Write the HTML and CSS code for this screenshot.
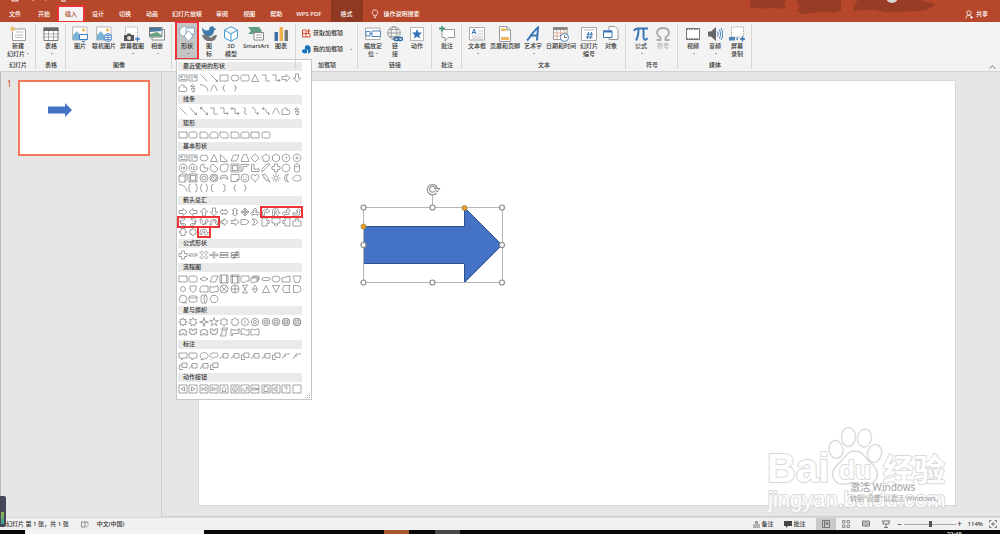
FILE: index.html
```
<!DOCTYPE html>
<html lang="zh-CN">
<head>
  <meta charset="utf-8">
  <title>演示文稿</title>
  <meta name="viewport" content="width=device-width, initial-scale=1">
  <link rel="stylesheet" href="styles.css">
</head>
<body>
  <header class="titlebar">
    <svg class="title-art" width="190" height="15" viewBox="0 0 190 15">
      <g fill="#983c26">
        <path d="M0 0H36L34 5L36 9C26 7 10 10 0 7Z"/>
        <path d="M46 0H91V11L82 13C76 10 66 13 52 14L47 11L50 7Z"/>
        <path d="M108 0H170L185 4C180 13 160 11 148 12C132 14 128 9 118 10L103 11L104 5Z"/>
      </g>
      <circle cx="142" cy="-3" r="6" fill="#d8d4d2"/>
    </svg>
    <svg class="quick-access" width="60" height="3" viewBox="0 0 60 3">
      <path d="M2 0V1H8V0M51 1H56" stroke="#fff" fill="none"/>
      <path d="M22 0l2 1M36 0l-1 1" stroke="#e0a595" fill="none"/>
    </svg>
    <nav class="tabs">
      <button class="tab tab-file">文件</button>
      <button class="tab">开始</button>
      <button class="tab active">插入</button>
      <button class="tab">设计</button>
      <button class="tab">切换</button>
      <button class="tab">动画</button>
      <button class="tab tab-long">幻灯片放映</button>
      <button class="tab">审阅</button>
      <button class="tab">视图</button>
      <button class="tab">帮助</button>
      <button class="tab tab-long">WPS PDF</button>
      <button class="tab tab-format">格式</button>
      <button class="tell-me">
        <svg width="8" height="10" viewBox="0 0 8 10" fill="none" stroke="#fff" stroke-width=".8"><path d="M2.800 7V6C.2 4 1 1 4 1s3.800 3 1.200 5V7ZM3 8.600H5"/></svg>
        操作说明搜索
      </button>
    </nav>
    <button class="share">
      <svg width="8" height="9" viewBox="0 0 8 9" fill="none" stroke="#fff" stroke-width=".8"><circle cx="4" cy="3" r="2.200"/><path d="M.8 8.500C1 6 2.500 5.200 4 5.200S6 6 6.200 7M5 7.500H8M6.500 6V9"/></svg>
      共享
    </button>
  </header>

  <div class="ribbon">
    <section class="group">
      <div class="group-body">
        <button class="tool w28">
          <svg class="icon" viewBox="0 0 16 16" fill="none"><path d="M3 3H15.500V14.500H2.500V6" fill="#fff" stroke="#999"/><path d="M6 6H13M5 9H13M5 11.500H13" stroke="#bbb"/><path d="M2.500 0V6M0 3H5.500M.7 1L4.500 5M4.500 1L.7 5" stroke="#eeb34c" stroke-width=".8"/></svg>
          <span>新建</span><span>幻灯片<i class="caret"></i></span>
        </button>
      </div>
      <h2>幻灯片</h2>
    </section>
    <section class="group">
      <div class="group-body">
        <button class="tool w22">
          <svg class="icon" viewBox="0 0 16 16"><path d="M1 2H15V14.500H1Z" fill="#fff" stroke="#777"/><path d="M.5 1.500H15.500V5H.5Z" fill="#666"/><path d="M1 8H15M1 11H15M5.500 5V14M10.500 5V14" stroke="#888" stroke-width=".7"/></svg>
          <span>表格</span><span><i class="caret"></i></span>
        </button>
      </div>
      <h2>表格</h2>
    </section>
    <section class="group">
      <div class="group-body">
        <button class="tool w20">
          <svg class="icon" viewBox="0 0 16 16"><path d="M.5 1H15V14H.5Z" fill="#fff" stroke="#aaa" stroke-width=".8"/><circle cx="11.500" cy="4" r="1.500" fill="#f0b04c"/><path d="M1 13V9L5 5L10 12L8 14H1" fill="#7db4d4"/><path d="M7.500 8.500H15.500V13.500H7.500ZM10 15.500H13" fill="#fff" stroke="#3f7fc1"/></svg>
          <span>图片</span>
        </button>
        <button class="tool w28">
          <svg class="icon" viewBox="0 0 16 16"><path d="M.5 1H15V14H.5Z" fill="#fff" stroke="#aaa" stroke-width=".8"/><circle cx="11.500" cy="4" r="1.500" fill="#f0b04c"/><path d="M1 13V9L5 5L10 12L8 14H1" fill="#7db4d4"/><g fill="#fff" stroke="#3f7fc1" stroke-width=".8"><circle cx="12" cy="11.500" r="4"/><path d="M8 11.500H16M12 7.500V15.500M9 9.500H15M9 13.500H15"/></g></svg>
          <span>联机图片</span>
        </button>
        <button class="tool w28">
          <svg class="icon" viewBox="0 0 16 16"><path d="M1.500 8V1H13.500V9" fill="#fff" stroke="#999" stroke-dasharray="1 1"/><path d="M0 9H2.500L3.500 7.500H6.500L7.500 9H10V15H0Z" fill="#555"/><circle cx="5" cy="12" r="2" fill="#ddd"/><path d="M11 13H16M13.500 10.500V15.500" stroke="#3f7fc1" stroke-width="1.300"/></svg>
          <span>屏幕截图</span><span><i class="caret"></i></span>
        </button>
        <button class="tool w22">
          <svg class="icon" viewBox="0 0 16 16"><path d="M3 3.500H15.500V14H3Z" fill="#fff" stroke="#888"/><path d="M.5 1.500H13V11H.5Z" fill="#fff" stroke="#777"/><path d="M1 2H12.500V5L1 6Z" fill="#4b7ba5"/><path d="M1 8L8 6L12.500 9V10.500H1Z" fill="#66a07d"/></svg>
          <span>相册</span><span><i class="caret"></i></span>
        </button>
      </div>
      <h2>图像</h2>
    </section>
    <section class="group">
      <div class="group-body">
        <div class="dropdown">
          <button class="tool w22 open" aria-expanded="true">
            <svg class="icon" viewBox="0 0 16 16" fill="#fff" stroke="#7197bd" stroke-width=".8"><circle cx="5.500" cy="5.500" r="5"/><path d="M7 2H15.500V8H7Z"/><path d="M9.500 4.500L14 10L9.500 15.500L5 10Z"/></svg>
            <span>形状</span><span><i class="caret"></i></span>
          </button>
          <div class="shape-menu">
            <section>
              <h3>最近使用的形状</h3>
              <div class="shape-grid" data-shapes="text vtext line lineArrow rect ellipse roundRect triangle elbow elbowArrow right down freeform scribble arc curve lbrace rbrace"></div>
            </section>
            <section>
              <h3>线条</h3>
              <div class="shape-grid" data-shapes="line lineArrow lineDouble elbow elbowArrow elbowDouble curved curvedArrow curvedDouble curve freeform scribble"></div>
            </section>
            <section>
              <h3>矩形</h3>
              <div class="shape-grid" data-shapes="rect roundRect snip snipTop snipDiag round1 roundTop rect roundRect"></div>
            </section>
            <section>
              <h3>基本形状</h3>
              <div class="shape-grid" data-shapes="text vtext ellipse triangle rightTriangle parallelogram trapezoid diamond pentagon hexagon heptagon octagon decagon dodecagon pie chord teardrop frame halfFrame corner stripe plus plaque can cube bevel donut noSymbol blockArc folded smiley heart lightning sun moon cloud arc parens braces lbracket rbracket lbrace rbrace"></div>
            </section>
            <section>
              <h3>箭头总汇</h3>
              <div class="shape-grid" data-shapes="right left up down leftRight upDown quad threeWay bent uturn leftUp bentUp curvedRight curvedLeft curvedUp curvedDown striped notched homePlate chevron calloutRight calloutDown calloutLeft calloutUp calloutLR calloutQuad circular">
                <span class="mark mark-bent"></span>
                <span class="mark mark-curved"></span>
                <span class="mark mark-circular"></span>
              </div>
            </section>
            <section>
              <h3>公式形状</h3>
              <div class="shape-grid" data-shapes="plus minus multiply divide equal notEqual"></div>
            </section>
            <section>
              <h3>流程图</h3>
              <div class="shape-grid" data-shapes="rect roundRect decision parallelogram predefined internal document multiDoc terminator ellipse manualInput manualOp connector offPage snipCard tape summing or collate sort triangle merge stored delay seqDisk magDisk direct display"></div>
            </section>
            <section>
              <h3>星与旗帜</h3>
              <div class="shape-grid" data-shapes="burst1 burst2 star4 star5 star6 star7 star8 star10 star12 star16 star24 star32 ribbonUp ribbonDown ribbonUp ribbonDown vscroll hscroll wave wave2"></div>
            </section>
            <section>
              <h3>标注</h3>
              <div class="shape-grid" data-shapes="callRect callRound callOval callCloud callLine callLine callBent callLine callLine callBent callOpen callOpen callBent callLine callLine callBent"></div>
            </section>
            <section>
              <h3>动作按钮</h3>
              <div class="shape-grid" data-shapes="actBack actNext actFirst actLast actHome actInfo actReturn actMovie actDoc actSound actHelp actBlank"></div>
            </section>
            <svg class="grip" width="5" height="5" viewBox="0 0 5 5" fill="#aaa"><path d="M4 0h1v1H4ZM2 2h1v1H2ZM4 2h1v1H4ZM0 4h1v1H0ZM2 4h1v1H2ZM4 4h1v1H4Z"/></svg>
          </div>
        </div>
        <button class="tool w22">
          <svg class="icon" viewBox="0 0 16 16"><path d="M1 1C2 4 5 5 8 4C8 0 12-1 13 2L15.500 3L13 4.500C13 9 9 11 6 10C3 9 1 6 1 1Z" fill="#3f79ad"/><path d="M1 9C5 8 8 10 10 12C12 9 14 9 16 9C15 14 12 16 8 15C5 15 2 13 1 9Z" fill="#777"/></svg>
          <span>图</span><span>标</span>
        </button>
        <button class="tool w22">
          <svg class="icon" viewBox="0 0 16 16" fill="#fff" stroke="#3e9bd0"><path d="M8 .8L14.500 4.200V11.800L8 15.200L1.500 11.800V4.200ZM1.500 4.200L8 7.800L14.500 4.200M8 7.800V15"/></svg>
          <span>3D</span><span>模型</span>
        </button>
        <button class="tool w28">
          <svg class="icon" viewBox="0 0 16 16"><path d="M0 1H11L14 5L11 8H0L3 5Z" fill="#5f9e80"/><path d="M6 6.500H15.500V14H6Z" fill="#fff" stroke="#888"/><path d="M8 9H14M8 11.500H14" stroke="#aaa"/></svg>
          <span>SmartArt</span>
        </button>
        <button class="tool w22">
          <svg class="icon" viewBox="0 0 16 16"><path d="M1.500 6H5V15H1.500Z" fill="#3f6fa8"/><path d="M6.500 1H10V15H6.500Z" fill="#efb04c"/><path d="M11.500 4H15V15H11.500Z" fill="#777"/></svg>
          <span>图表</span>
        </button>
      </div>
    </section>
    <section class="group group-addins">
      <div class="group-body addins">
        <button class="addin">
          <svg width="9" height="9" viewBox="0 0 9 9" fill="none" stroke="#d2502e"><path d="M.5 1H4V8H.5ZM.5 4.500H8V8H4M6.500 0V4M4.800 2H8.500"/></svg>
          获取加载项
        </button>
        <button class="addin">
          <svg width="9" height="9" viewBox="0 0 9 9" fill="#1673be"><path d="M3 1L6 0L8.500 2V7L6 9V5L3 4ZM0 5L3 4L5 5V8L2 8.500L0 7Z"/></svg>
          我的加载项<i class="caret"></i>
        </button>
      </div>
      <h2>加载项</h2>
    </section>
    <section class="group">
      <div class="group-body">
        <button class="tool w22">
          <svg class="icon" viewBox="0 0 16 16" fill="#fff"><path d="M.5 2H15V13.500H.5Z" stroke="#aaa"/><path d="M1 5.500H5V10H1ZM7 5H15.500V10.500H7Z" stroke="#4e86bd"/><path d="M5 7.500H7" stroke="#4e86bd"/></svg>
          <span>缩放定</span><span>位<i class="caret"></i></span>
        </button>
        <button class="tool w22">
          <svg class="icon" viewBox="0 0 16 16" fill="none"><g stroke="#888" stroke-width=".8"><circle cx="7" cy="7" r="6.300"/><ellipse cx="7" cy="7" rx="3" ry="6.300"/><path d="M.7 7H13.300M2 3.500H12M2 10.500H12"/></g><g stroke="#2f6ca8" stroke-width="1.300"><rect x="7" y="11.500" width="5" height="3" rx="1.500"/><rect x="11" y="11.500" width="4.500" height="3" rx="1.500"/></g></svg>
          <span>链</span><span>接</span>
        </button>
        <button class="tool w22">
          <svg class="icon" viewBox="0 0 16 16"><path d="M1.500 1.500H14.500V14.500H1.500Z" fill="#fff" stroke="#777" stroke-dasharray="1 1"/><path d="M8 3L9.400 6.400L13 6.600L10.200 9L11.100 12.600L8 10.600L4.900 12.600L5.800 9L3 6.600L6.600 6.400Z" fill="#2f72b5"/></svg>
          <span>动作</span>
        </button>
      </div>
      <h2>链接</h2>
    </section>
    <section class="group">
      <div class="group-body">
        <button class="tool w22">
          <svg class="icon" viewBox="0 0 16 16"><path d="M3 3.500H15.500V11.500H9L6 15V11.500H3Z" fill="#fff" stroke="#999"/><path d="M0 2.500H6M3 0V5.500" stroke="#4c9b78" stroke-width="1.800"/></svg>
          <span>批注</span>
        </button>
      </div>
      <h2>批注</h2>
    </section>
    <section class="group">
      <div class="group-body">
        <button class="tool w22">
          <svg class="icon" viewBox="0 0 16 16" fill="none"><path d="M.5 1.500H15.500V14H.5Z" fill="#fff" stroke="#aaa"/><path d="M3 8L5 3L7 8M3.700 6.500H6.300" stroke="#2f72b5"/><path d="M9 5H14M9 7.500H14M3 10H14M3 12H14" stroke="#bbb" stroke-width=".8"/></svg>
          <span>文本框</span><span><i class="caret"></i></span>
        </button>
        <button class="tool w34">
          <svg class="icon" viewBox="0 0 16 16"><path d="M2.500 .5H10L13.500 4V15.500H2.500Z" fill="#fff" stroke="#999"/><path d="M4 2.500H9.500V5H4ZM4 11H12V14H4Z" fill="#edb95c"/><path d="M10 .5V4H13.500" fill="none" stroke="#999"/></svg>
          <span>页眉和页脚</span>
        </button>
        <button class="tool w22">
          <svg class="icon" viewBox="0 0 16 16" fill="none" stroke="#3a76b5" stroke-width="2"><path d="M2 14.500C5 12 8 5 13 1.500L12 14.500M5 9.500H12"/></svg>
          <span>艺术字</span><span><i class="caret"></i></span>
        </button>
        <button class="tool w34">
          <svg class="icon" viewBox="0 0 16 16"><path d="M.5 1.500H14V13.500H.5Z" fill="#fff" stroke="#999"/><path d="M0 1H14.500V4H0Z" fill="#888"/><path d="M1 7H14M1 10H14M4 4V13M7.500 4V13M11 4V13" stroke="#d99778" stroke-width=".8"/><circle cx="11.500" cy="11.500" r="4" fill="#fff" stroke="#4e86bd"/><path d="M11.500 9V11.500H14" fill="none" stroke="#555" stroke-width=".8"/></svg>
          <span>日期和时间</span>
        </button>
        <button class="tool w22">
          <svg class="icon" viewBox="0 0 16 16"><path d="M.5 1.500H15.500V14.500H.5Z" fill="#fff" stroke="#aaa"/><path d="M3 4H13" stroke="#bbb"/><path d="M7.500 6L6.500 13M10.500 6L9.500 13M5.500 8.200H12M5 11H11.500" stroke="#3a76b5" fill="none"/></svg>
          <span>幻灯片</span><span>编号</span>
        </button>
        <button class="tool w22">
          <svg class="icon" viewBox="0 0 16 16" fill="#fff"><path d="M6 .5H12L15 3.500V13.500H6Z" stroke="#999"/><path d="M.5 5H9V11.500H.5Z" stroke="#3a76b5"/><path d="M.5 5.500H9" stroke="#3a76b5" stroke-width="2"/></svg>
          <span>对象</span>
        </button>
      </div>
      <h2>文本</h2>
    </section>
    <section class="group">
      <div class="group-body">
        <button class="tool w22">
          <svg class="icon" viewBox="0 0 16 16" fill="none" stroke="#3a76b5" stroke-width="2"><path d="M1 5C2 2.500 3 2.500 5 2.500H15M5.500 3C5.500 8 5 11 3 14.500M10.500 3V11C10.500 14 12.500 15 14.500 12"/></svg>
          <span>公式</span><span><i class="caret"></i></span>
        </button>
        <button class="tool w22" disabled>
          <svg class="icon" viewBox="0 0 16 16" fill="none" stroke="#aaa" stroke-width="1.800"><path d="M1.500 14H5.500V11.500C0 8 1.500 2 8 2S16 8 10.500 11.500V14H14.500"/></svg>
          <span>符号</span>
        </button>
      </div>
      <h2>符号</h2>
    </section>
    <section class="group">
      <div class="group-body">
        <button class="tool w22">
          <svg class="icon" viewBox="0 0 16 16"><path d="M1.500 2.500H14.500V13.500H1.500Z" fill="#fff" stroke="#777"/><path d="M1.500 3H14.500M1.500 13H14.500" stroke="#777" stroke-width="2" stroke-dasharray="1.500 1"/></svg>
          <span>视频</span><span><i class="caret"></i></span>
        </button>
        <button class="tool w22">
          <svg class="icon" viewBox="0 0 16 16"><path d="M1 5.500H4L9 1V15L4 10.500H1Z" fill="#666"/><path d="M10.500 5.500Q12 8 10.500 10.500M12.500 3.500Q15 8 12.500 12.500M14 2Q17.500 8 14 14" fill="none" stroke="#4e86bd"/></svg>
          <span>音频</span><span><i class="caret"></i></span>
        </button>
        <button class="tool w22">
          <svg class="icon" viewBox="0 0 16 16"><path d="M2.500 1H14.500V11H2.500Z" fill="#fff" stroke="#999" stroke-dasharray="1 1"/><path d="M0 11H6V14.500H0ZM7.500 11.500H9V14H7.500Z" fill="#4e86bd"/><path d="M11 13H16M13.500 10.500V15.500" stroke="#2f72b5" stroke-width="1.300"/></svg>
          <span>屏幕</span><span>录制</span>
        </button>
      </div>
      <h2>媒体</h2>
    </section>
    <button class="collapse" aria-label="折叠功能区"><svg width="7" height="4" viewBox="0 0 7 4" fill="none" stroke="#777"><path d="M.5 3.500L3.500 .8L6.500 3.500"/></svg></button>
  </div>

  <main class="editor">
    <aside class="thumbs">
      <span class="thumb-number">1</span>
      <div class="thumb">
        <svg class="thumb-arrow" width="24" height="14" viewBox="0 0 24 14"><path d="M0 3.500H17V0L24 7L17 14V10.500H0Z" fill="#4472c4"/></svg>
      </div>
    </aside>
    <div class="stage">
      <div class="slide">
        <svg class="arrow-shape" width="156" height="110" viewBox="0 0 156 110">
          <path d="M8.500 45.500H109.500V26.500L147 64L109.500 101.500V82.500H8.500Z" fill="#4472c4" stroke="#2f528f"/>
          <path d="M8.500 26.500H147.500V101.500H8.500ZM77.500 14V26" fill="none" stroke="#b5b5b5"/>
          <g fill="#fff" stroke="#8c8c8c" stroke-width="1.200">
            <circle cx="8.500" cy="26.500" r="2.500"/>
            <circle cx="77.500" cy="26.500" r="2.500"/>
            <circle cx="147" cy="26.500" r="2.500"/>
            <circle cx="8.500" cy="64" r="2.500"/>
            <circle cx="147" cy="64" r="2.500"/>
            <circle cx="8.500" cy="101.500" r="2.500"/>
            <circle cx="77.500" cy="101.500" r="2.500"/>
            <circle cx="147" cy="101.500" r="2.500"/>
          </g>
          <g fill="#f0a01e" stroke="#9b8050" stroke-width=".8">
            <circle cx="8.500" cy="45.500" r="2.500"/>
            <circle cx="109.500" cy="27" r="2.500"/>
          </g>
          <g fill="none">
            <path d="M81.500 12A5.200 5.200 0 1 1 82.500 7.500M80 10A3 3 0 1 1 80.500 7.500" stroke="#909090" stroke-width="1.200"/>
            <path d="M79.500 7.500H85L82 11Z" fill="#fff" stroke="#909090"/>
          </g>
        </svg>
      </div>
    </div>
    <svg class="watermark" width="190" height="92" viewBox="0 0 190 92">
      <g fill="#fff" stroke="#dcdcdc" stroke-width="1.500">
        <ellipse cx="74" cy="25.500" rx="7" ry="9" transform="rotate(-12 74 25.500)"/>
        <ellipse cx="86.500" cy="13" rx="7" ry="9.500"/>
        <ellipse cx="102.500" cy="14" rx="7" ry="9" transform="rotate(12 102.500 14)"/>
        <ellipse cx="112.500" cy="29.500" rx="7" ry="9" transform="rotate(15 112.500 29.500)"/>
        <path d="M93 27C84 27 84 34 76 40C70 46 69 52 73 57C78 63 85 59 93 59S108 63 113 57C117 52 116 46 110 40C102 34 102 27 93 27Z"/>
      </g>
      <g class="logo-text">
        <text x="5" y="58" font-size="40">Bai</text>
        <text x="77" y="55" font-size="26">du</text>
        <text x="121" y="57" font-size="31">经验</text>
      </g>
      <text class="logo-url" x="6" y="83" font-size="22">jingyan.baidu.com</text>
    </svg>
    <div class="activate">
      <p class="activate-title">激活 Windows</p>
      <p>转到“设置”以激活 Windows。</p>
    </div>
  </main>

  <footer class="statusbar">
    <span>幻灯片 第 1 张，共 1 张</span>
    <svg width="8" height="7" viewBox="0 0 8 7" fill="none" stroke="#777" stroke-width=".8"><path d="M4 1H.5V6H4ZM4 1H7V3M5 6.500L7.500 4"/></svg>
    <span class="language">中文(中国)</span>
    <button class="status-btn">
      <svg width="7" height="7" viewBox="0 0 7 7" fill="none" stroke="#555" stroke-width=".8"><path d="M3.500 0L5 2H2ZM0 4H7M0 6H7"/></svg>
      备注
    </button>
    <button class="status-btn">
      <svg width="8" height="7" viewBox="0 0 8 7" fill="#444"><path d="M0 0H8V5H4L2 7V5H0Z"/></svg>
      批注
    </button>
    <div class="views">
      <button class="view active" aria-label="普通"><svg width="8" height="8" viewBox="0 0 8 8" fill="none" stroke="#777"><path d="M.5 .5H7.500V7.500H.5ZM2.500 1V7M4 2.500H6V4.500H4Z"/></svg></button>
      <button class="view" aria-label="幻灯片浏览"><svg width="8" height="8" viewBox="0 0 8 8" fill="none" stroke="#777" stroke-width=".8"><path d="M.5 .5H3V3H.5ZM5 .5H7.500V3H5ZM.5 5H3V7.500H.5ZM5 5H7.500V7.500H5Z"/></svg></button>
      <button class="view" aria-label="阅读视图"><svg width="8" height="8" viewBox="0 0 8 8" fill="none" stroke="#777"><path d="M.5 1H3.500L4 2L4.500 1H7.500V6H.5ZM4 1.500V7M2 2V5M6 2V5"/></svg></button>
      <button class="view" aria-label="幻灯片放映"><svg width="8" height="8" viewBox="0 0 8 8" fill="none" stroke="#777"><path d="M0 1H8M1 1V4H7V1M4 4V7M2 7.500H6"/></svg></button>
    </div>
    <button class="zoom-step" aria-label="缩小">−</button>
    <input class="zoom" type="range" min="0" max="100" value="52" aria-label="显示比例">
    <button class="zoom-step" aria-label="放大">+</button>
    <span class="zoom-value">114%</span>
    <button class="fit" aria-label="适应窗口"><svg width="8" height="8" viewBox="0 0 8 8" fill="none" stroke="#777"><path d="M.5 2.500V.5H2.500M5.500 .5H7.500V2.500M7.500 5.500V7.500H5.500M2.500 7.500H.5V5.500M4 2V6M2 4H6"/></svg></button>
  </footer>

  <div class="taskbar">
    <span class="task-search"></span>
    <span class="task-app task-orange"></span>
    <span class="task-app"></span>
    <span class="task-clock">22:45</span>
  </div>
  <div class="meter"><span></span></div>

  <script src="shapes.js"></script>
</body>
</html>
```

FILE: styles.css
```
* {
  box-sizing: border-box;
}

body {
  margin: 0;
  height: 100vh;
  display: flex;
  flex-direction: column;
  overflow: hidden;
  position: relative;
  background: #e6e6e6;
  color: #333;
  font-family: "Noto Sans", "Noto Sans CJK SC", sans-serif;
  font-size: 6px;
  font-weight: 500;
  line-height: 8px;
}

button {
  margin: 0;
  padding: 0;
  border: 0;
  background: none;
  color: inherit;
  font: inherit;
}

h2, h3, p {
  margin: 0;
  font-size: 6px;
  font-weight: inherit;
}

svg {
  display: block;
  flex: none;
}

/* Title bar and tabs */
.titlebar {
  position: relative;
  flex: none;
  display: flex;
  justify-content: space-between;
  align-items: flex-end;
  height: 22px;
  background: #b7472a;
  color: #fff;
}

.title-art {
  position: absolute;
  top: 0;
  right: 60px;
}

.quick-access {
  position: absolute;
  top: 0;
  left: 10px;
}

.tabs {
  position: relative;
  display: flex;
  align-self: stretch;
  align-items: flex-end;
  gap: 1px;
}

.tab {
  height: 16px;
  padding: 0 7px;
  white-space: nowrap;
}

.tab-file {
  padding: 0 9px;
}

.tab-long {
  padding: 0 6px;
}

.tab.active {
  background: #f3f3f3;
  color: #b7472a;
  outline: 2px solid #ee3338;
  outline-offset: -1px;
}

.tab-format {
  height: 22px;
  margin-left: 2px;
  padding: 6px 10px 0;
  background: #8f3822;
}

.tell-me,
.share {
  display: flex;
  align-items: center;
  gap: 5px;
  height: 16px;
}

.tell-me {
  margin-left: 7px;
}

.share {
  position: relative;
  gap: 3px;
  margin-right: 12px;
}

/* Ribbon */
.ribbon {
  position: relative;
  z-index: 2;
  flex: none;
  display: flex;
  height: 50px;
  background: #f3f3f3;
  border-bottom: 1px solid #d2d2d2;
}

.group {
  position: relative;
  display: flex;
  flex-direction: column;
  justify-content: space-between;
  padding: 0 4px 2px;
}

.group::after {
  content: "";
  position: absolute;
  top: 2px;
  right: 0;
  bottom: 2px;
  border-right: 1px solid #d5d5d5;
}

.group h2 {
  text-align: center;
}

.group-body {
  display: flex;
}

.tool {
  display: flex;
  flex-direction: column;
  align-items: center;
  height: 37px;
  padding-top: 4px;
  white-space: nowrap;
}

.tool:disabled {
  color: #aaa;
}

.tool span {
  min-height: 8px;
}

.icon {
  width: 16px;
  height: 16px;
}

.w20 { width: 20px; }
.w22 { width: 22px; }
.w28 { width: 28px; }
.w34 { width: 34px; }

.caret {
  display: inline-block;
  margin: 0 0 2px 2px;
  border: 1px solid transparent;
  border-top-color: #555;
  border-bottom: 0;
}

.tool.open {
  background: #c5c5c5;
  outline: 2px solid #ee3338;
  outline-offset: -1px;
}

.group-addins {
  width: 62px;
}

.addins {
  flex-direction: column;
  gap: 6px;
  padding: 6px 0 0 2px;
}

.addin {
  display: flex;
  align-items: center;
  gap: 2px;
  height: 10px;
  white-space: nowrap;
}

.addin .caret {
  margin: 0 0 0 5px;
}

.collapse {
  align-self: flex-end;
  margin: 0 4px 2px auto;
}

/* Shapes menu */
.dropdown {
  position: relative;
}

.shape-menu {
  position: absolute;
  top: 37px;
  left: 0;
  display: flex;
  flex-direction: column;
  justify-content: space-between;
  width: 136px;
  height: 341px;
  padding: 2px 9px 5px 1px;
  background: #fff;
  border: 1px solid #c6c6c6;
}

.shape-menu h3 {
  height: 9px;
  padding-left: 5px;
  background: #eaeaea;
  line-height: 9px;
}

.shape-grid {
  position: relative;
  display: grid;
  grid-template-columns: repeat(12, 1fr);
  grid-auto-rows: 10px;
  margin-top: 2px;
}

.shape {
  display: flex;
  justify-content: center;
  align-items: center;
}

.shape svg {
  width: 10px;
  height: 10px;
  fill: none;
  stroke: #7c7c7c;
  stroke-width: 0.7;
}

.shape .accent {
  stroke: #3a76b5;
}

.mark {
  position: absolute;
  inset: -1px;
  border: 2px solid #ee3338;
}

.mark-bent {
  grid-area: 1 / 9 / 2 / 13;
}

.mark-curved {
  grid-area: 2 / 1 / 3 / 5;
}

.mark-circular {
  grid-area: 3 / 3 / 4 / 4;
  inset: -1px -2px;
}

.grip {
  position: absolute;
  right: 1px;
  bottom: 1px;
}

/* Editing area */
.editor {
  position: relative;
  flex: 1;
  display: flex;
  min-height: 0;
  border-left: 1px solid #b9b9b9;
}

.thumbs {
  display: flex;
  align-items: flex-start;
  gap: 6px;
  width: 161px;
  padding: 8px 11px 0 6px;
  border-right: 1px solid #cfcfcf;
}

.thumb-number {
  width: 5px;
  color: #d2502e;
  font-size: 8px;
}

.thumb {
  flex: 1;
  height: 76px;
  padding: 21px 28px;
  background: #fff;
  border: 2px solid #f3795a;
}

.stage {
  flex: 1;
  display: flex;
  padding: 8px 44px 10px 36px;
  border-bottom: 1px solid #cfcfcf;
}

.slide {
  position: relative;
  flex: 1;
  background: #fff;
  border: 1px solid #d8d8d8;
}

.arrow-shape {
  position: absolute;
  top: 100px;
  left: 156px;
}

.activate {
  position: absolute;
  right: 48px;
  bottom: 13px;
  width: 102px;
  color: #a3a3a3;
  font-weight: 400;
  white-space: nowrap;
}

.activate p {
  font-size: 7px;
  line-height: 10px;
}

.activate .activate-title {
  font-size: 10px;
  line-height: 14px;
}

.watermark {
  position: absolute;
  right: 48px;
  bottom: 1px;
}

.logo-text,
.logo-url {
  fill: #fff;
  stroke: #dadada;
  stroke-width: 2;
  stroke-linejoin: round;
  paint-order: stroke;
  font-family: "Liberation Sans", "Noto Sans CJK SC", sans-serif;
}

.logo-text {
  font-weight: bold;
}

.logo-url {
  font-weight: 400;
}

/* Status bar */
.statusbar {
  flex: none;
  display: flex;
  align-items: center;
  height: 13px;
  padding: 0 3px 0 6px;
  background: #f1f1f1;
  border-top: 1px solid #dadada;
  white-space: nowrap;
}

.statusbar > svg {
  margin: 0 8px 0 12px;
}

.language {
  margin-right: auto;
}

.status-btn {
  display: flex;
  align-items: center;
  gap: 2px;
  margin-right: 10px;
}

.views {
  display: flex;
}

.view {
  display: flex;
  justify-content: center;
  align-items: center;
  width: 20px;
  height: 12px;
}

.view.active {
  background: #c9c9c9;
}

.zoom-step {
  width: 8px;
  font-size: 8px;
}

.zoom {
  width: 52px;
  height: 8px;
  margin: 0;
  appearance: none;
  background: linear-gradient(#aaa, #aaa) center / 100% 1px no-repeat;
}

.zoom::-webkit-slider-thumb {
  appearance: none;
  width: 3px;
  height: 6px;
  background: #555;
}

.zoom-value {
  margin: 0 6px 0 4px;
}

/* Desktop edge */
.taskbar {
  flex: none;
  display: flex;
  height: 4px;
  padding: 0 38px 0 25px;
  overflow: hidden;
  background: #080808;
}

.task-search {
  width: 179px;
  margin-right: 180px;
  background: #f2f2f2;
}

.task-app {
  width: 25px;
  margin-right: 26px;
  background: #484848;
}

.task-orange {
  background: #a4582e;
}

.task-clock {
  margin-left: auto;
  color: #fff;
}

.meter {
  position: absolute;
  bottom: 7px;
  left: 0;
  z-index: 3;
  width: 6px;
  height: 31px;
  padding: 16px 2px 3px 1px;
  background: #454858;
  border-radius: 0 2px 2px 0;
}

.meter span {
  display: block;
  height: 100%;
  background: linear-gradient(#9cb443, #35a09a);
}
```

FILE: shapes.js
```
// Outlines for the shapes menu, drawn in a 10 x 10 box
function circle(r, cx = 5, cy = 5) {
  return `M${cx + r} ${cy}A${r} ${r} 0 1 1 ${cx - r} ${cy}A${r} ${r} 0 1 1 ${cx + r} ${cy}Z`;
}

function star(n, outer, inner) {
  let points = [];
  for (let i = 0; i < n * 2; i++) {
    const r = i % 2 ? inner : outer;
    const a = Math.PI * i / n - Math.PI / 2;
    points.push((5 + r * Math.cos(a)).toFixed(2) + ' ' + (5 + r * Math.sin(a)).toFixed(2));
  }
  return 'M' + points.join('L') + 'Z';
}

function polygon(n) {
  return star(n, 4, 4 * Math.cos(Math.PI / n));
}

const box = 'M1 1H9V9H1Z';
const rect = 'M1 2H9V8H1Z';

const shapes = {
  text: rect + 'M6 4H8M2.5 6.5H8|M2.5 5L3.5 3L4.500 5',
  vtext: rect + 'M2.5 4H5M2.5 6H5|M6 5L7 3L8 5',
  line: 'M1.500 1.500L8.500 8.500',
  lineArrow: 'M1.500 1.500L8.500 8.500M8.500 6.500V8.500H6.500',
  lineDouble: 'M1.500 1.500L8.500 8.500M8.500 6.500V8.500H6.500M1.500 3.500V1.500H3.500',
  elbow: 'M1 2H5V8H9',
  elbowArrow: 'M1 2H5V7.500H9M7.500 6L9 7.500L7.500 9',
  elbowDouble: 'M1 2.500H5V7.500H9M7.500 6L9 7.500L7.500 9M2.500 1L1 2.500L2.500 4',
  curved: 'M3 1.500C9 2 1 8 7 8.500',
  curvedArrow: 'M2 1.500C8 2 2 7.500 8.500 7.500M7 6L8.500 7.500L7 9',
  curvedDouble: 'M1.500 2.500C8 2 2 7.500 8.500 7.500M7 6L8.500 7.500L7 9M3 1L1.500 2.500L3 4',
  curve: 'M1 8C3 8 3 2 5 2S7 8 9 8',
  freeform: 'M1 8.500V4L4 2C5 1 7 2 5.500 4H8C9 5 9 7 8 8.500Z',
  scribble: 'M5 1L2.500 3.500L7 3L3 6L7 5.500L5 9M3.500 7.500L5 9L7 8',
  rect: rect,
  roundRect: 'M2.500 2H7.500Q9 2 9 3.500V6.500Q9 8 7.500 8H2.500Q1 8 1 6.500V3.500Q1 2 2.500 2Z',
  snip: 'M1 2H7L9 4V8H1Z',
  snipTop: 'M3 2H7L9 4V8H1V4Z',
  snipDiag: 'M1 2H7L9 4V8H3L1 6Z',
  round1: 'M1 2H6Q9 2 9 5V8H1Z',
  roundTop: 'M3 2H7Q9 2 9 4V8H1V4Q1 2 3 2Z',
  ellipse: 'M9 5A4 3 0 1 1 1 5A4 3 0 1 1 9 5Z',
  triangle: 'M5 1.500L8.500 8.500H1.500Z',
  rightTriangle: 'M1.500 1.500L8.500 8.500H1.500Z',
  parallelogram: 'M3.500 2H9L6.500 8H1Z',
  trapezoid: 'M3.500 1.500H6.500L9 8.500H1Z',
  diamond: 'M5 1L9 5L5 9L1 5Z',
  pentagon: polygon(5),
  hexagon: polygon(6),
  heptagon: polygon(7) + 'M4.500 4H5.500L5 6.500',
  octagon: polygon(8) + circle(1),
  decagon: polygon(10) + 'M3.500 3.500V6.500' + circle(1, 6, 5),
  dodecagon: polygon(12) + 'M3.500 3.500V6.500M5 4H6.500L5 6.500H7',
  pie: 'M5 1V5H9A4 4 0 1 1 5 1Z',
  chord: 'M4 1A4 4 0 1 0 9 6Z',
  teardrop: 'M9 1V5A4 4 0 1 1 5 1Z',
  frame: box + 'M2.500 2.500H7.500V7.500H2.500Z',
  halfFrame: 'M1 1.500H9L7 3.500H3V7L1 9Z',
  corner: 'M1.500 1.500H4V6H9V8.500H1.500Z',
  stripe: 'M1 6L6 1H9L1 9Z',
  plus: 'M3.500 1H6.500V3.500H9V6.500H6.500V9H3.500V6.500H1V3.500H3.500Z',
  plaque: polygon(8),
  can: 'M2.500 2.500C2.500 .5 7.500 .5 7.500 2.500V8C7.500 9.500 2.500 9.500 2.500 8ZM2.500 2.500C2.500 4 7.500 4 7.500 2.500',
  cube: 'M1 3L3 1H9V7L7 9H1ZM1 3H7V9M7 3L9 1',
  bevel: box + 'M2.500 2.500H7.500V7.500H2.500ZM1 1L2.500 2.500M9 1L7.500 2.500M1 9L2.500 7.500M9 9L7.500 7.500',
  donut: circle(4) + circle(2),
  noSymbol: circle(4) + circle(2.5) + 'M3 3L7 7',
  blockArc: 'M1 6A4 4 0 0 1 9 6H7A2 2 0 0 0 3 6Z',
  folded: 'M1 1.500H9V6.500L7 8.500H1ZM7 8.500V6.500H9',
  smiley: circle(4) + 'M3.500 3.500V4.500M6.500 3.500V4.500M3 6Q5 8 7 6',
  heart: 'M5 9L1.500 5C0 2 3.500 0 5 3C6.500 0 10 2 8.500 5Z',
  lightning: 'M1 2L4 1L6 3.500L5.500 4L8 6L7 6.500L9 9L4.500 7L5 6.500L2.500 5L3.500 4Z',
  sun: circle(2) + 'M5 .5V2M5 8V9.500M.5 5H2M8 5H9.500M2 2L3 3M7 7L8 8M2 8L3 7M7 3L8 2',
  moon: 'M7.500 1A4 4 0 1 0 7.500 9A5 5 0 0 1 7.500 1Z',
  cloud: 'M2.500 7.500C0 7 .5 4 2.500 4C3 1.500 5 2 5.500 3C7 1.500 8.500 2.500 8 4C10 5 9 8 7 7.500Q5 9 2.500 7.500Z',
  arc: 'M1 1.500Q8 2 9 8.500',
  parens: 'M3 1Q1 1 1 3V7Q1 9 3 9M7 1Q9 1 9 3V7Q9 9 7 9',
  braces: 'M3.500 1Q2 1 2 3Q2 5 1 5Q2 5 2 7Q2 9 3.500 9M6.500 1Q8 1 8 3Q8 5 9 5Q8 5 8 7Q8 9 6.500 9',
  lbracket: 'M4.500 1.500Q2.500 1.500 2.500 3V7Q2.500 8.500 4.500 8.500',
  rbracket: 'M4 1.500Q6 1.500 6 3V7Q6 8.500 4 8.500',
  lbrace: 'M6 2Q4.500 2 4.500 4Q4.500 5 3.500 5Q4.500 5 4.500 6Q4.500 8 6 8',
  rbrace: 'M4 2Q5.500 2 5.500 4Q5.500 5 6.500 5Q5.500 5 5.500 6Q5.500 8 4 8',
  right: 'M1 3.500H5V1.500L9 5L5 8.500V6.500H1Z',
  left: 'M9 3.500H5V1.500L1 5L5 8.500V6.500H9Z',
  up: 'M3.500 9V5H1.500L5 1L8.500 5H6.500V9Z',
  down: 'M3.500 1V5H1.500L5 9L8.500 5H6.500V1Z',
  leftRight: 'M1 5L3.500 2V3.500H6.500V2L9 5L6.500 8V6.500H3.500V8Z',
  upDown: 'M5 1L8 3.500H6.500V6.500H8L5 9L2 6.500H3.500V3.500H2Z',
  quad: 'M5 1L6.500 2.500H5.500V4.500H7.500V3.500L9 5L7.500 6.500V5.500H5.500V7.500H6.500L5 9L3.500 7.500H4.500V5.500H2.500V6.500L1 5L2.500 3.500V4.500H4.500V2.500H3.500Z',
  threeWay: 'M5 1L7 3H6V5.500H7.500V4.500L9.500 6.500L7.500 8.500V7.500H2.500V8.500L.5 6.500L2.500 4.500V5.500H4V3H3Z',
  bent: 'M1.500 8.500V5Q1.500 3 3.500 3H6V1.500L9 4L6 6V5H4Q3.500 5 3.500 5.500V8.500Z',
  uturn: 'M1.500 8.500V4Q1.500 1.500 4.500 1.500T7.500 4V5.500H9L6.500 8.500L4 5.500H5.500V4.500Q5.500 3.500 4.500 3.500T3.500 4.500V8.500Z',
  leftUp: 'M1 6.500L3.500 4.500V5.500H6V3.500H5L7 1L9 3.500H8V7.500H3.500V8.500Z',
  bentUp: 'M1 6H5.500V4H4L6.500 1.500L9 4H7.500V8H1Z',
  curvedRight: 'M7 1Q2 1 2 4T5.500 7V6L8 8L5.500 9.500V8.500Q2 8 2 4M7 1V2.500Q4 3 3 5',
  curvedLeft: 'M3 1Q8 1 8 4T4.500 7V6L2 8L4.500 9.500V8.500Q8 8 8 4M3 1V2.500Q6 3 7 5',
  curvedUp: 'M1 2Q1 7.500 4 7.500T7 4.500H6L8 2L9.500 4.500H8.500Q8 7.500 4 7.500M1 2H2.500Q3 5.500 5 6.500',
  curvedDown: 'M1 8Q1 2.500 4 2.500T7 5.500H6L8 8L9.500 5.500H8.500Q8 2.500 4 2.500M1 8H2.500Q3 4.500 5 3.500',
  striped: 'M1 3.500V6.500M2 3.500V6.500M3 3.500H5V1.500L9 5L5 8.500V6.500H3Z',
  notched: 'M1 3.500H5V1.500L9 5L5 8.500V6.500H1L2.500 5Z',
  homePlate: 'M1 2.500H6L9 5L6 7.500H1Z',
  chevron: 'M2 2H5L8 5L5 8H2L5 5Z',
  calloutRight: 'M1 1H6V4H7.500V3L9 5L7.500 7V6H6V9H1Z',
  calloutDown: 'M1 1H9V6H6V7.500H7L5 9L3 7.500H4V6H1Z',
  calloutLeft: 'M9 1H4V4H2.500V3L1 5L2.500 7V6H4V9H9Z',
  calloutUp: 'M1 9H9V4H6V2.500H7L5 1L3 2.500H4V4H1Z',
  calloutLR: 'M3 1.500H7V4L9 5L7 6V8.500H3V6L1 5L3 4Z',
  calloutQuad: 'M2.500 2.500H4L5 1L6 2.500H7.500V4L9 5L7.500 6V7.500H6L5 9L4 7.500H2.500V6L1 5L2.500 4Z',
  circular: 'M1 7.500V5.500Q1 2 4.500 2T8 5.500H9.500L7 8.500L4.500 5.500H6Q6 4 4.500 4T3 5.500V7.500Z',
  minus: 'M1 4H9V6H1Z',
  multiply: 'M2.500 1L5 3.500L7.500 1L9 2.500L6.500 5L9 7.500L7.500 9L5 6.500L2.500 9L1 7.500L3.500 5L1 2.500Z',
  divide: 'M1 4.300H9V5.700H1Z' + circle(.8, 5, 2.5) + circle(.8, 5, 7.5),
  equal: 'M1 2.500H9V4.500H1ZM1 5.500H9V7.500H1Z',
  notEqual: 'M1 2.500H9V4.500H1ZM1 5.500H9V7.500H1ZM7 1L3 9M8 1L4 9',
  decision: 'M5 3L9 5L5 7L1 5Z',
  predefined: box + 'M2.500 1V9M7.500 1V9',
  internal: box + 'M2.500 1V9M1 2.500H9M7.500 2.500V9',
  document: 'M1 2H9V7Q7 6.500 5 8T1 7.500Z',
  multiDoc: 'M1 4H7V8Q5 7.500 4 8.500T1 8ZM2 4V3H8V7H7M3 3V2H9V6H8',
  terminator: 'M3 3.500H7Q9 3.500 9 5T7 6.500H3Q1 6.500 1 5T3 3.500Z',
  manualInput: 'M1 4L9 2V8H1Z',
  manualOp: 'M1 2H9L7 8.500H3Z',
  connector: circle(2.5),
  offPage: 'M2 2H8V6L5 8.500L2 6Z',
  snipCard: 'M3 2H9V8H1V4Z',
  tape: 'M1 2Q3 4 5 3T9 2V8Q7 7 5 8T1 8Z',
  summing: circle(4) + 'M2.200 2.200L7.800 7.800M7.800 2.200L2.200 7.800',
  or: circle(4) + 'M5 1V9M1 5H9',
  collate: 'M2.500 1H7.500L2.500 9H7.500Z',
  sort: 'M5 1L7.500 5L5 9L2.500 5ZM2.500 5H7.500',
  merge: 'M1.500 1.500H8.500L5 8.500Z',
  stored: 'M3 1.500H9Q7 5 9 8.500H3Q0 5 3 1.500Z',
  delay: 'M1.500 1.500H5Q9 1.500 9 5T5 8.500H1.500Z',
  seqDisk: circle(3.8) + 'M5 8.800H9',
  magDisk: 'M1 3C1 1.500 9 1.500 9 3V7C9 8.500 1 8.500 1 7ZM1 3C1 4.500 9 4.500 9 3',
  direct: 'M3 1H7Q8 1 8 5T7 9H3Q2 9 2 5T3 1ZM7 1Q5 1 5 5T7 9',
  display: 'M3 1.500H7Q9 3 9 5T7 8.500H3L1 5Z',
  burst1: star(8, 4.200, 2.400),
  burst2: star(7, 4.300, 2.500),
  star4: star(4, 4.500, 1.300),
  star5: star(5, 4.500, 1.800),
  star6: star(6, 4.200, 2.600),
  star7: star(7, 4.200, 3),
  star8: star(8, 4, 3.300) + 'M5 3.500V6.500',
  star10: star(10, 4, 3.300) + circle(1.5),
  star12: star(12, 4, 3.200) + circle(2) + 'M4 5H6',
  star16: star(16, 4, 3.200) + circle(2) + 'M4 4L6 6',
  star24: star(24, 4, 3.200) + circle(2) + 'M3 5H7',
  star32: star(32, 4, 3.300) + circle(2) + 'M4 6L6 4',
  ribbonUp: 'M1 4H3V2.500H7V4H9L8 6L9 8H6V6.500H4V8H1L2 6Z',
  ribbonDown: 'M1 2H4V3.500H6V2H9L8 4L9 6H7V7.500H3V6H1L2 4Z',
  vscroll: 'M3 1H9Q8 1 8 3H7V8Q7 9 6 9H1Q2 9 2 7H3ZM3 3H7',
  hscroll: 'M1 3Q1 2 2 2V3H8Q9 3 9 1.500V6.500H2.500V8.500H1Z',
  wave: 'M1 2.500Q3 .5 5 2.500T9 2V8Q7 9 5 7.500T1 8Z',
  wave2: 'M1 2.500Q2 1.500 3.500 2.500T6 2.500T9 2V8Q8 8.500 6 7.500T3.500 8T1 8Z',
  callRect: 'M1 2H9V7H5L3.500 9V7H1Z',
  callRound: 'M2 2H8Q9 2 9 3V6Q9 7 8 7H5.500L4 9V7H2Q1 7 1 6V3Q1 2 2 2Z',
  callOval: 'M3 7.500A4 3.200 0 1 1 5 8L2 9Z',
  callCloud: 'M2.500 6C0 6 .5 3 2.500 3C3 1 5 1.500 5.500 2.500C7 1 9 2 8.500 3.500C10 5 8 7 6.500 6Q4 8 2.500 6M2 8V9',
  callLine: 'M4 2.500H9V7H4ZM4 4L1 8',
  callBent: 'M4 2H9V6.500H4ZM4 4H1.500V8.500H5',
  callOpen: 'M1 8L4 4M4 3H9M4 3V6',
  actBack: box + 'M6.500 3V7L3 5Z',
  actNext: box + 'M3.500 3V7L7 5Z',
  actFirst: box + 'M7 3V7L4 5ZM3 3V7',
  actLast: box + 'M3 3V7L6 5ZM7 3V7',
  actHome: box + 'M2.500 5L5 2.500L7.500 5M3.500 5V7.500H6.500V5',
  actInfo: box + circle(2.5) + 'M5 4V6.500',
  actReturn: box + 'M3 4V6Q3 7 4 7H6Q7 7 7 4M5.500 4.500L7 3L8 4.500',
  actMovie: box + 'M2.500 4H6V6H2.500ZM6 5L8 4V6Z',
  actDoc: box + 'M3 2.500H6L7 3.500V7.500H3Z',
  actSound: box + 'M3 4H4L6 2.500V7.500L4 6H3Z',
  actHelp: box + 'M3.800 4Q3.800 2.500 5 2.500T6.200 4Q6 5 5 5.500V6M5 7V7.600',
  actBlank: box
};

document.querySelectorAll('.shape-grid').forEach((grid) => {
  grid.dataset.shapes.split(' ').forEach((name) => {
    const paths = shapes[name].split('|');
    const button = document.createElement('button');
    button.className = 'shape';
    button.setAttribute('aria-label', name);
    button.innerHTML = '<svg viewBox="0 0 10 10"><path d="' + paths[0] + '"/>' +
      (paths[1] ? '<path class="accent" d="' + paths[1] + '"/>' : '') + '</svg>';
    grid.appendChild(button);
  });
});
```
